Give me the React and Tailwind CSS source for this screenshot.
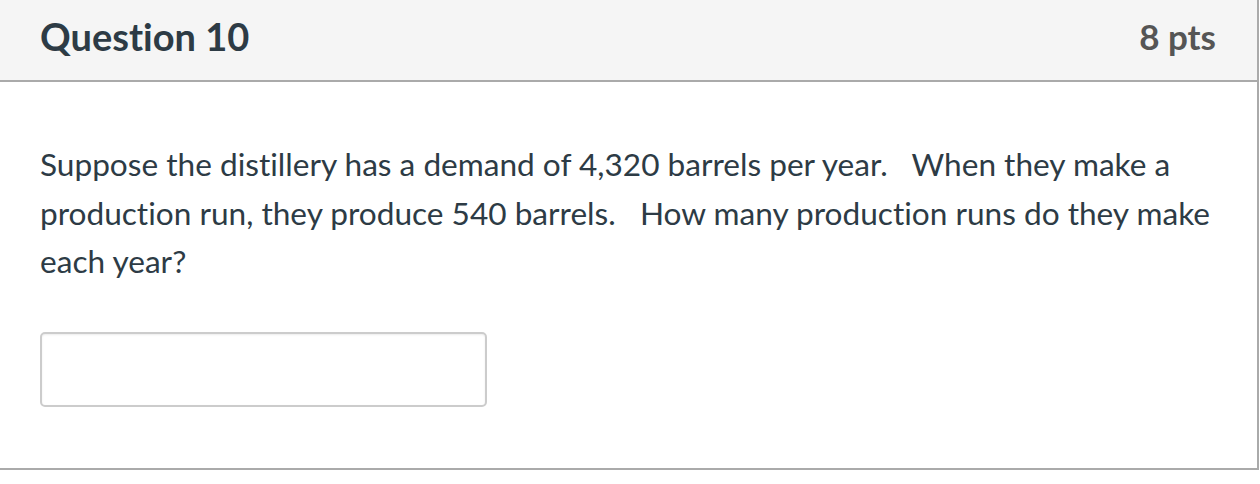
export default function App() {
  return (
    <div className="w-[1260px] h-[484px] bg-white [font-variant-ligatures:none]" style={{ fontFamily: "Lato, 'Liberation Sans', sans-serif" }}>
      <div className="w-[1259px] border-r-2 border-b-2 border-[#aaaaaa]">
        <div className="h-[82px] bg-[#f5f5f5] border-b-2 border-[#aaaaaa] flex items-center justify-between pl-[40px] pr-[41px] pb-[8px]">
          <div className="text-[38px] font-bold text-[#2d3b45] leading-none">Question 10</div>
          <div className="text-[35px] font-bold text-[#555555] leading-none">8 pts</div>
        </div>
        <div className="pl-[40px] pt-[58px] pb-[61px]">
          <div className="text-[31.6px] leading-[48.5px] text-[#2d3b45] whitespace-nowrap">
            Suppose the distillery has a demand of 4,320 barrels per year.&nbsp;&nbsp; When they make a
            <br />
            production run, they produce 540 barrels.&nbsp;&nbsp; How many production runs do they make
            <br />
            each year?
          </div>
          <input
            type="text"
            className="block mt-[46px] w-[447px] h-[75px] border-2 border-[#cccccc] rounded-[5px] bg-white shadow-[inset_0_1px_2px_rgba(0,0,0,0.08)] outline-none"
          />
        </div>
      </div>
    </div>
  );
}
